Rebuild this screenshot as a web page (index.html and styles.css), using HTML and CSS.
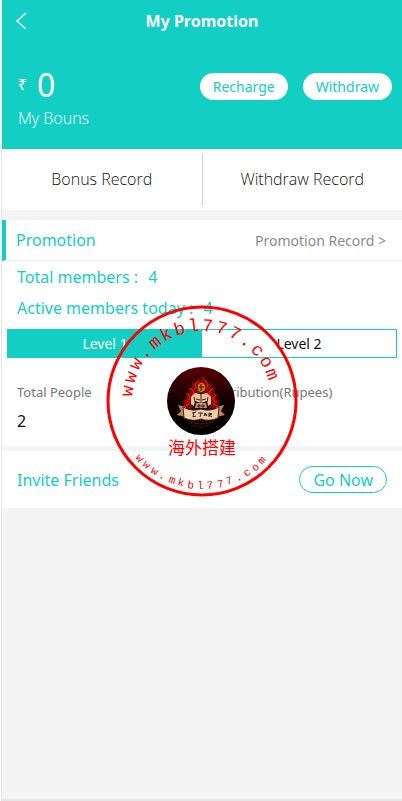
FILE: index.html
```html
<!DOCTYPE html>
<html lang="en">
<head>
  <meta charset="UTF-8">
  <meta name="viewport" content="width=device-width, initial-scale=1.0">
  <title>My Promotion</title>
  <link rel="stylesheet" href="styles.css">
</head>
<body>
  <div class="page">
    <header class="top">
      <nav class="nav">
        <a class="back" href="#" aria-label="Back">
          <svg width="12" height="18" viewBox="0 0 12 18"><path d="M11 1 L2 9 L11 17" fill="none" stroke="#fff" stroke-width="1.5"/></svg>
        </a>
        <h1>My Promotion</h1>
      </nav>
      <div class="wallet">
        <div class="balance">
          <p class="amount"><span class="currency">₹</span>0</p>
          <p class="label">My Bouns</p>
        </div>
        <div class="actions">
          <button type="button">Recharge</button>
          <button type="button">Withdraw</button>
        </div>
      </div>
    </header>

    <div class="records">
      <a href="#">Bonus Record</a>
      <a href="#">Withdraw Record</a>
    </div>

    <main>
      <section class="promotion">
        <div class="title-row">
          <h2>Promotion</h2>
          <a href="#">Promotion Record &gt;</a>
        </div>
        <p class="members">Total members : <span>4</span></p>
        <p class="members">Active members today : <span>4</span></p>
        <div class="levels">
          <button type="button" class="active">Level 1</button>
          <button type="button">Level 2</button>
        </div>
        <dl class="stats">
          <div>
            <dt>Total People</dt>
            <dd>2</dd>
          </div>
          <div>
            <dt>Contribution(Rupees)</dt>
            <dd></dd>
          </div>
        </dl>

        <!-- Stamp over the card -->
        <svg class="stamp" width="192" height="192" viewBox="0 0 192 192">
          <defs>
            <linearGradient id="disc" x1="0" y1="0" x2="0" y2="1">
              <stop offset="0" stop-color="#570000"/>
              <stop offset="0.5" stop-color="#120000"/>
              <stop offset="1" stop-color="#000"/>
            </linearGradient>
          </defs>
          <circle cx="96" cy="96" r="94" fill="none" stroke="#f00" stroke-width="3"/>
          <text class="arc-top"
            x="26 28 32 39 48 58 70 83 96 109 122 133 144 153 159"
            y="92 79 66 55 45 37 31 27 26 27 31 37 45 55 66"
            rotate="-82 -71 -60 -50 -39 -28 -17 -7 4 15 26 37 47 58 69">www.mkbl777.com</text>
          <text class="arc-bottom"
            x="29 36 44 52 62 71 81 91 101 112 121 131 140 149 156"
            y="153 160 167 172 177 180 183 184 184 183 180 177 172 167 160"
            rotate="47 41 34 28 21 14 8 1 -6 -12 -19 -26 -32 -39 -46">www.mkbl777.com</text>
          <!-- crest -->
          <circle cx="95" cy="96" r="34" fill="url(#disc)"/>
          <g transform="translate(95 96)">
            <path d="M-17 7 L-18 0 L-14 -3 L-16 -8 L-11 -7 L-13 -14 L-8 -12 L-9 -19 L-5 -17 L-3 -23 L0 -20 L2 -26 L4 -20 L7 -21 L6 -17 L11 -18 L9 -12 L14 -14 L12 -7 L17 -7 L15 -3 L18 1 L17 7 Z" fill="#8f0808"/>
            <path d="M-14 1 L-11 -3 L-13 -8 M-9 -4 L-7 -9 L-10 -13 M-5 -12 L-6 -17 L-2 -20 M5 -12 L7 -17 L3 -22 M9 -4 L8 -9 L12 -13 M14 2 L12 -3 L15 -6 M-16 5 L-12 3 M16 5 L12 3" fill="none" stroke="#ef2418" stroke-width="1"/>
            <path d="M-9 0 L-6 -8 L6 -8 L9 0 L8 8 L-8 8 Z" fill="#080202"/>
            <path d="M-3 -11 L-3 -16 L-1 -18 L2 -18 L4 -16 L4 -11 L1 -9 L-1 -9 Z" fill="#c57a1e"/>
            <path d="M-2 -14 L3 -14 M0 -17 L0 -10" stroke="#341102" stroke-width="1"/>
            <path d="M-10 3 L-10 -4 L-6 -8 L-1 -7 L0 -6 L1 -7 L6 -8 L10 -4 L10 3 L7 5 L6 0 L0 2 L-6 0 L-7 5 Z" fill="#edc4a0"/>
            <path d="M0 -6 L0 5 M-5 -2 L-1 -1 M5 -2 L1 -1 M-7 -4 L-6 1 M7 -4 L6 1" stroke="#48180f" stroke-width="1"/>
            <path d="M-5 2 L5 2 L6 7 L-6 7 Z" fill="#c89270"/>
            <path d="M-2 3 L-2 7 M2 3 L2 7 M-4 5 L4 5" stroke="#48180f" stroke-width="1"/>
            <path d="M-23 4 L-15 6 L-15 16 L-24 14 L-20 10 Z M23 4 L15 6 L15 16 L24 14 L20 10 Z" fill="#b78463"/>
            <path d="M-18 6 Q-9 11 0 8 Q9 11 18 6 L17 17 Q8 21 0 18 Q-8 21 -17 17 Z" fill="#efcda7" stroke="#4e2014" stroke-width="1"/>
            <path d="M-9 12 L-5 11 M-7 11 L-8 16 L-5 15 M-3 12 L2 12 M0 12 L-1 16 M3 15 L4 12 L6 15 M3 14 L6 14 M8 16 L8 12 L11 13 L8 14 L11 16" fill="none" stroke="#3b251c" stroke-width="1"/>
            <path d="M-11 21 Q0 25 11 21 M-8 24 L-4 25 M-2 26 L2 26 M4 25 L8 24" fill="none" stroke="#650909" stroke-width="1"/>
          </g>
          <text class="stamp-name" x="96" y="149">海外搭建</text>
        </svg>
      </section>

      <section class="invite">
        <h2>Invite Friends</h2>
        <button type="button">Go Now</button>
      </section>
    </main>
  </div>
</body>
</html>
```
FILE: styles.css
```css
:root {
  --teal: #13cec3;
  --bg: #f4f4f4;
  --line: #e6e6e6;
  --grey: #8c8c8c;
}
* {
  box-sizing: border-box;
}
body {
  margin: 0;
  padding-left: 1px;
  font-family: "Noto Sans", "Open Sans", sans-serif;
  font-size: 16px;
  color: #111;
  background: #fff;
}
h1, h2, p, dl, dd {
  margin: 0;
  font-weight: 400;
}
a {
  color: inherit;
  text-decoration: none;
}
button {
  padding: 0;
  font: inherit;
  cursor: pointer;
}
.page {
  min-height: 100vh;
  background: var(--bg);
  border-left: 1px solid var(--line);
  border-bottom: 2px solid var(--line);
}

/* Header */
.top {
  padding-bottom: 18px;
  background: var(--teal);
  color: #fff;
}
.nav {
  display: grid;
  grid-template-columns: 40px 1fr 40px;
  align-items: center;
  height: 41px;
}
.back {
  display: flex;
  padding-left: 13px;
}
h1 {
  font-size: 16px;
  font-weight: 700;
  text-align: center;
}
.wallet {
  display: flex;
  justify-content: space-between;
  padding: 22px 10px 0 16px;
}
.amount {
  display: flex;
  align-items: center;
  height: 42px;
  font-size: 32px;
}
.currency {
  width: 19px;
  font-size: 16px;
}
.label {
  font-family: "Open Sans", sans-serif;
  font-weight: 300;
  line-height: 26px;
}
.actions {
  display: flex;
  gap: 15px;
  padding-top: 10px;
}
.actions button {
  height: 27px;
  padding: 0 13px;
  border: none;
  border-radius: 14px;
  font-size: 14px;
  background: #fff;
  color: var(--teal);
}

/* Record links */
.records {
  display: flex;
  padding: 5px 0;
  margin-bottom: 10px;
  background: #fff;
}
.records a {
  flex: 1;
  font-family: "Open Sans", sans-serif;
  font-weight: 300;
  line-height: 51px;
  text-align: center;
}
.records a + a {
  border-left: 1px solid #ccc;
}

/* Promotion card */
.promotion {
  position: relative;
  margin-bottom: 5px;
  background: #fff;
}
.title-row {
  display: flex;
  justify-content: space-between;
  align-items: center;
  height: 41px;
  margin-bottom: 1px;
  padding: 0 16px 0 10px;
  border-left: 4px solid var(--teal);
  border-bottom: 1px solid #f0f0f0;
}
.title-row a {
  font-size: 14px;
  color: var(--grey);
}
h2 {
  font-size: 16px;
  color: var(--teal);
}
.members {
  padding-left: 15px;
  line-height: 31px;
  color: var(--teal);
}
.members span {
  padding-left: 6px;
}
.levels {
  display: flex;
  margin: 5px 5px 0;
  border: 1px solid var(--teal);
}
.levels button {
  flex: 1;
  height: 27px;
  border: none;
  font-size: 14px;
  background: #fff;
  color: #111;
}
.levels .active {
  background: var(--teal);
  color: #fff;
}
.stats {
  display: flex;
  padding: 20px 15px 10px;
}
.stats div {
  flex: 1;
}
.stats dt {
  font-size: 13px;
  line-height: 28px;
  color: #777;
}
.stats dd {
  line-height: 30px;
}

/* Stamp */
.stamp {
  position: absolute;
  top: 85px;
  left: 50%;
  margin-left: -96px;
  pointer-events: none;
}
.stamp text {
  fill: #f00;
}
.stamp .arc-top {
  font-family: "Liberation Mono", monospace;
  font-size: 18px;
}
.stamp .arc-bottom {
  font-family: "Liberation Mono", monospace;
  font-size: 11px;
}
.stamp .stamp-name {
  font-family: "Noto Sans CJK SC", sans-serif;
  font-size: 17px;
  text-anchor: middle;
}

/* Invite */
.invite {
  display: flex;
  justify-content: space-between;
  align-items: center;
  height: 57px;
  padding: 0 15px;
  background: #fff;
}
.invite button {
  height: 27px;
  padding: 0 13px;
  border: 1px solid var(--teal);
  border-radius: 14px;
  background: #fff;
  color: var(--teal);
}
```
